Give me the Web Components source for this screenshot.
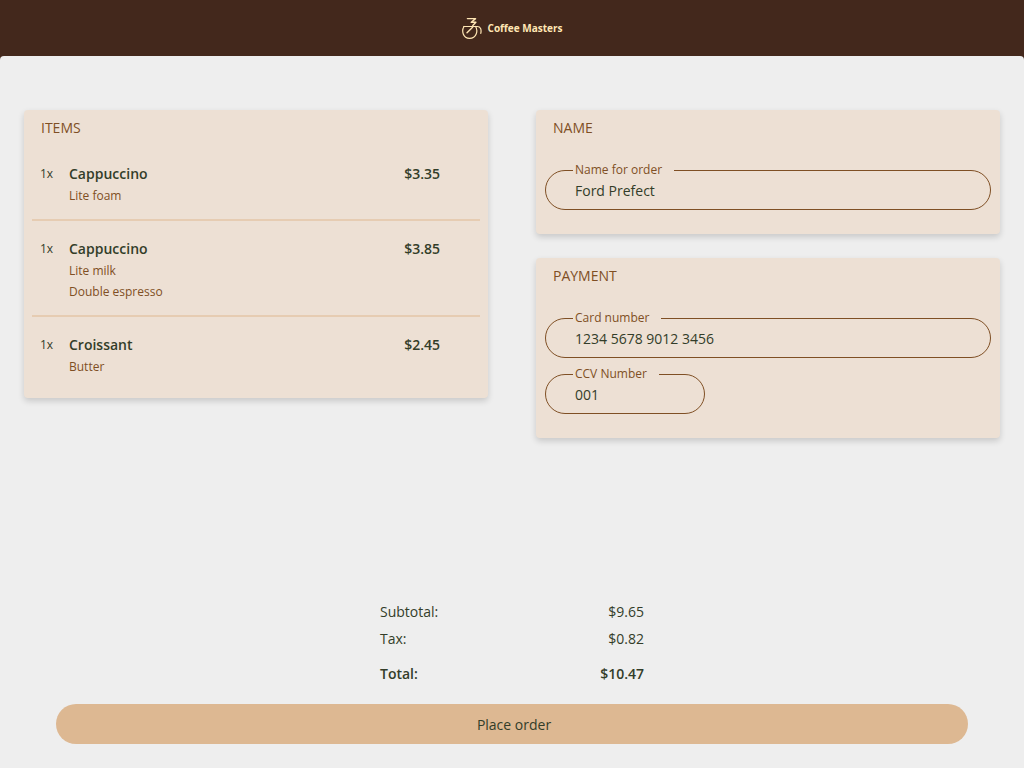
<!DOCTYPE html>
<html lang="en">

<head>
 <meta charset="UTF-8">
 <meta name="viewport" content="width=device-width">
 <title>Coffee Masters</title>
 <style>
  :root {
   --Header: #43281c;
   --OnHeader: #ffe6b4;
   --Surface: #eeeeee;
   --OnSurface: #333d29;
   --Card: #ede0d4;
   --Accent: #7f4f24;
   --Divider: #e6ccb2;
   --Button: #ddb892;
  }

  body {
   margin: 0;
   min-height: 100vh;
   display: flex;
   flex-direction: column;
   background-color: var(--Header);
   color: var(--OnSurface);
   font-family: "Open Sans", sans-serif;
   font-size: 14px;
   line-height: 20px;
  }
 </style>
</head>

<body>
 <coffee-header>Coffee Masters</coffee-header>
 <order-page>
  <order-card slot="items" headline="Items">
   <order-item quantity="1" name="Cappuccino" price="3.35">
    <li>Lite foam</li>
   </order-item>
   <order-item quantity="1" name="Cappuccino" price="3.85">
    <li>Lite milk</li>
    <li>Double espresso</li>
   </order-item>
   <order-item quantity="1" name="Croissant" price="2.45">
    <li>Butter</li>
   </order-item>
  </order-card>
  <order-card slot="details" headline="Name">
   <outlined-field label="Name for order" value="Ford Prefect"></outlined-field>
  </order-card>
  <order-card slot="details" headline="Payment">
   <outlined-field label="Card number" value="1234 5678 9012 3456"></outlined-field>
   <outlined-field class="short" label="CCV Number" value="001"></outlined-field>
  </order-card>
  <order-totals slot="footer" subtotal="9.65" tax="0.82"></order-totals>
  <place-order slot="footer">Place order</place-order>
 </order-page>

 <script>
  class CoffeeHeader extends HTMLElement {
   constructor() {
    super()
    this.attachShadow({ mode: "open" }).innerHTML =
     /* html */
     `<style>
     :host {
      display: block;
      background-color: var(--Header);
      color: var(--OnHeader);
     }

     header {
      display: flex;
      align-items: center;
      justify-content: center;
      gap: 6px;
      height: 56px;
      font-size: 10px;
      font-weight: 700;
     }

     svg {
      width: 20px;
      height: 22px;
      fill: none;
      stroke: currentColor;
      stroke-linejoin: round;
      stroke-linecap: round;
     }
     </style>
     <header>
      <svg viewBox="0 0 20 22" aria-hidden="true">
       <path stroke-width="1.4" d="M5.4 1.6H13.6L9.2 5.2H13.9L10.8 8.4"/>
       <path stroke-width="1.2" d="M1.6 9.5H15.4C18.6 9.5 19.6 12.4 18.8 16.4M2 9.5C-.6 13.6 .8 21.3 7.6 21.3C14.6 21.3 16.2 13.6 13.6 9.5"/>
       <path stroke-width="1.4" d="M10.6 10.2L5 15.8"/>
      </svg>
      <span><slot></slot></span>
     </header>`
   }
  }
  customElements.define("coffee-header", CoffeeHeader)

  class OrderPage extends HTMLElement {
   constructor() {
    super()
    this.attachShadow({ mode: "open" }).innerHTML =
     /* html */
     `<style>
     :host {
      flex: 1;
      display: flex;
      background-color: var(--Surface);
      border-radius: 4px 4px 0 0;
     }

     main {
      flex: 1;
      display: flex;
      flex-direction: column;
      justify-content: space-between;
      gap: 24px;
      padding: 54px 24px 24px;
     }

     .columns {
      display: grid;
      grid-template-columns: repeat(2, minmax(0, 1fr));
      align-items: start;
      gap: 48px;
     }

     section {
      display: flex;
      flex-direction: column;
      gap: 24px;
     }

     footer {
      display: flex;
      flex-direction: column;
      gap: 20px;
      padding: 0 32px;
     }

     @media (max-width: 640px) {
      .columns {
       grid-template-columns: minmax(0, 1fr);
       gap: 24px;
      }
     }
     </style>
     <main>
      <div class="columns">
       <section><slot name="items"></slot></section>
       <section><slot name="details"></slot></section>
      </div>
      <footer><slot name="footer"></slot></footer>
     </main>`
   }
  }
  customElements.define("order-page", OrderPage)

  class OrderCard extends HTMLElement {
   constructor() {
    super()
    this.attachShadow({ mode: "open" }).innerHTML =
     /* html */
     `<style>
     :host {
      display: block;
      padding: 8px;
      border-radius: 4px;
      background-color: var(--Card);
      box-shadow: 0 3px 6px rgb(0 0 0 / 16%);
     }

     h2 {
      margin: 0 9px 8px;
      color: var(--Accent);
      font-size: 14px;
      font-weight: 400;
      text-transform: uppercase;
     }
     </style>
     <h2></h2>
     <slot></slot>`
   }

   connectedCallback() {
    this.shadowRoot.querySelector("h2").textContent =
     this.getAttribute("headline")
   }
  }
  customElements.define("order-card", OrderCard)

  class OrderItem extends HTMLElement {
   constructor() {
    super()
    this.attachShadow({ mode: "open" }).innerHTML =
     /* html */
     `<style>
     :host {
      display: grid;
      grid-template-columns: 21px 1fr auto;
      column-gap: 8px;
      padding: 16px 40px 13px 8px;
      border-bottom: 2px solid var(--Divider);
      line-height: 23px;
     }

     :host(:last-child) {
      border-bottom: none;
     }

     .quantity {
      font-size: 12px;
     }

     .name, .price {
      font-weight: 600;
     }

     ul {
      grid-column: 2;
      margin: 0;
      padding: 0;
      list-style: none;
      color: var(--Accent);
      font-size: 12px;
      line-height: 21px;
     }
     </style>
     <span class="quantity"></span>
     <span class="name"></span>
     <span class="price"></span>
     <ul><slot></slot></ul>`
   }

   connectedCallback() {
    const root = this.shadowRoot
    root.querySelector(".quantity").textContent =
     `${this.getAttribute("quantity")}x`
    root.querySelector(".name").textContent =
     this.getAttribute("name")
    root.querySelector(".price").textContent =
     `$${this.getAttribute("price")}`
   }
  }
  customElements.define("order-item", OrderItem)

  class OutlinedField extends HTMLElement {
   constructor() {
    super()
    this.attachShadow({ mode: "open" }).innerHTML =
     /* html */
     `<style>
     :host {
      display: block;
      margin: 0 1px;
      padding: 16px 0;
     }

     :host(.short) {
      max-width: 160px;
     }

     /* the label's upper half stands out of the outline */
     :host(:not(:last-child)) {
      padding-bottom: 0;
     }

     :host(:not(:first-child)) {
      padding-top: 8px;
     }

     fieldset {
      min-width: 0;
      margin: 0;
      padding: 0 29px 0 27px;
      border: 1px solid var(--Accent);
      border-radius: 20px;
     }

     legend {
      padding: 0 12px 0 2px;
      color: var(--Accent);
      font-size: 12px;
      line-height: 16px;
     }

     label {
      display: block;
     }

     input {
      display: block;
      box-sizing: border-box;
      width: 100%;
      height: 38px;
      margin: -7px 0 0;
      padding: 0 0 0 2px;
      border: none;
      outline: none;
      background: none;
      color: inherit;
      font: inherit;
     }
     </style>
     <fieldset>
      <legend><label for="field"></label></legend>
      <input id="field" type="text">
     </fieldset>`
   }

   connectedCallback() {
    const root = this.shadowRoot
    root.querySelector("label").textContent =
     this.getAttribute("label")
    root.querySelector("input").value =
     this.getAttribute("value")
   }
  }
  customElements.define("outlined-field", OutlinedField)

  class OrderTotals extends HTMLElement {
   constructor() {
    super()
    this.attachShadow({ mode: "open" }).innerHTML =
     /* html */
     `<style>
     :host {
      display: block;
     }

     dl {
      display: flex;
      flex-direction: column;
      gap: 7px;
      max-width: 264px;
      margin: 0 auto;
     }

     div {
      display: flex;
      justify-content: space-between;
     }

     dd {
      margin: 0;
     }

     .total {
      margin-top: 8px;
      font-weight: 600;
     }
     </style>
     <dl>
      <div><dt>Subtotal:</dt><dd id="subtotal"></dd></div>
      <div><dt>Tax:</dt><dd id="tax"></dd></div>
      <div class="total"><dt>Total:</dt><dd id="total"></dd></div>
     </dl>`
   }

   connectedCallback() {
    const root = this.shadowRoot
    const subtotal = Number(this.getAttribute("subtotal"))
    const tax = Number(this.getAttribute("tax"))
    root.querySelector("#subtotal").textContent =
     `$${subtotal.toFixed(2)}`
    root.querySelector("#tax").textContent =
     `$${tax.toFixed(2)}`
    root.querySelector("#total").textContent =
     `$${(subtotal + tax).toFixed(2)}`
   }
  }
  customElements.define("order-totals", OrderTotals)

  class PlaceOrder extends HTMLElement {
   constructor() {
    super()
    this.attachShadow({ mode: "open" }).innerHTML =
     /* html */
     `<style>
     :host {
      display: block;
     }

     button {
      display: block;
      width: 100%;
      height: 40px;
      padding: 2px 12px 0 16px;
      border: none;
      border-radius: 20px;
      background-color: var(--Button);
      color: inherit;
      font: inherit;
      cursor: pointer;
     }
     </style>
     <button type="button"><slot></slot></button>`
   }
  }
  customElements.define("place-order", PlaceOrder)
 </script>
</body>

</html>
